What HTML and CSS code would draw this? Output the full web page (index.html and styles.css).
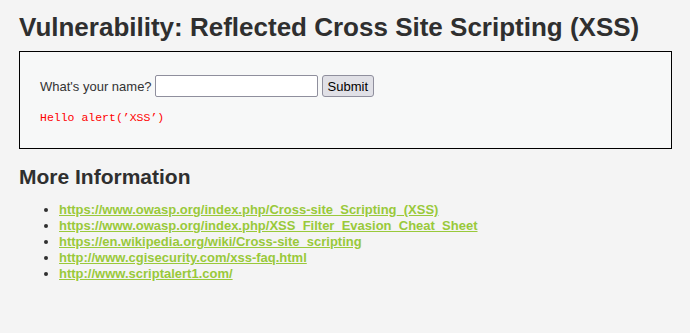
FILE: index.html
```html
<!DOCTYPE html>
<html lang="en">
<head>
    <meta charset="UTF-8">
    <title>Vulnerability: Reflected Cross Site Scripting (XSS)</title>
    <link rel="stylesheet" href="styles.css">
</head>
<body>
    <div class="body-padded">
        <h1>Vulnerability: Reflected Cross Site Scripting (XSS)</h1>

        <div class="vulnerable-code-area">
            <form name="XSS" action="#" method="GET">
                <p>
                    What's your name?
                    <input type="text" name="name">
                    <input type="submit" value="Submit">
                </p>
            </form>
            <pre>Hello alert(’XSS’)</pre>
        </div>

        <h2>More Information</h2>
        <ul>
            <li><a href="#">https://www.owasp.org/index.php/Cross-site_Scripting_(XSS)</a></li>
            <li><a href="#">https://www.owasp.org/index.php/XSS_Filter_Evasion_Cheat_Sheet</a></li>
            <li><a href="#">https://en.wikipedia.org/wiki/Cross-site_scripting</a></li>
            <li><a href="#">http://www.cgisecurity.com/xss-faq.html</a></li>
            <li><a href="#">http://www.scriptalert1.com/</a></li>
        </ul>
    </div>
</body>
</html>
```

FILE: styles.css
```css
* {
    margin: 0;
    padding: 0;
    box-sizing: border-box;
}

body {
    background-color: #f4f4f4;
    font-family: "Liberation Sans", Arial, sans-serif;
    font-size: 13px;
    color: #2f2f2f;
}

.body-padded {
    padding: 11px 18px 20px 19px;
}

h1 {
    font-size: 26px;
    line-height: 32px;
    font-weight: bold;
    color: #2f2f2f;
    margin-bottom: 8px;
}

.vulnerable-code-area {
    background: #f7f8f8;
    border: 1px solid #000;
    padding: 23px 20px 23px 20px;
}

.vulnerable-code-area p {
    display: flex;
    align-items: center;
    gap: 3px;
    font-size: 13px;
    color: #333;
}

input[type="text"] {
    width: 163px;
    height: 22px;
    border: 1px solid #8f8f9d;
    border-radius: 2px;
    background: #fff;
    padding: 1px 2px;
}

input[type="submit"] {
    height: 22px;
    margin-left: 1px;
    padding: 0 5px;
    font-family: "Liberation Sans", Arial, sans-serif;
    font-size: 13px;
    color: #000;
    background: #e0e0e6;
    border: 1px solid #8f8f9d;
    border-radius: 3px;
}

pre {
    margin-top: 14px;
    font-family: "Liberation Mono", "Courier New", monospace;
    font-size: 11.5px;
    line-height: 14px;
    color: #f00;
}

h2 {
    margin-top: 16px;
    font-size: 21px;
    line-height: 24px;
    font-weight: bold;
    color: #2f2f2f;
    margin-bottom: 13px;
}

ul {
    padding-left: 40px;
}

li {
    font-size: 13px;
    line-height: 16px;
    font-weight: bold;
}

a {
    color: #99c93a;
    text-decoration: underline;
}
```
